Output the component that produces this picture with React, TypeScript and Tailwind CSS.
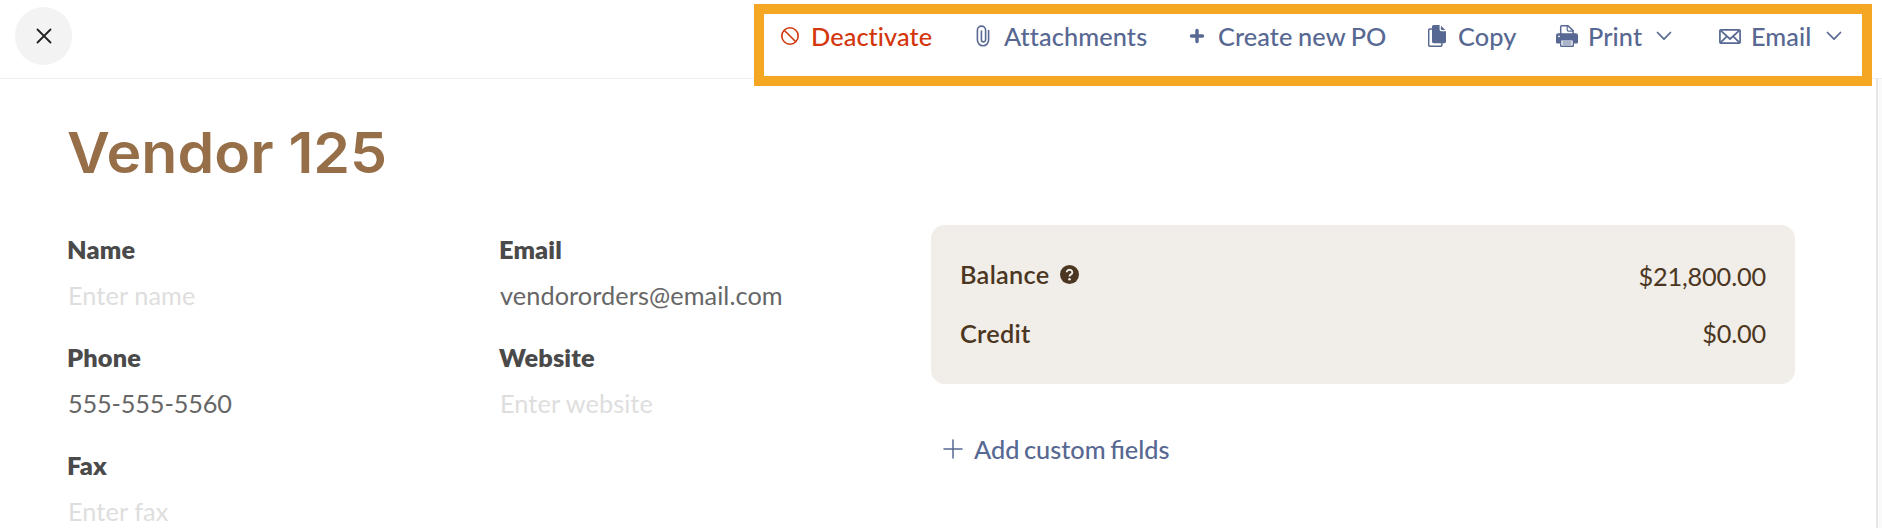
import React from 'react';

type IconProps = { className?: string };

const CloseIcon = () => (
  <svg className="w-4 h-4" viewBox="0 0 16 16" fill="none" stroke="currentColor" strokeWidth="1.8" strokeLinecap="round">
    <path d="M1.500 1.500l13 13M14.500 1.500l-13 13" />
  </svg>
);

const BanIcon = () => (
  <svg className="w-[18px] h-[18px]" viewBox="0 0 18 18" fill="none" stroke="currentColor" strokeWidth="1.6">
    <circle cx="9" cy="9" r="8.200" />
    <path d="M3.200 3.200l11.600 11.600" />
  </svg>
);

const ClipIcon = () => (
  <svg className="w-[14px] h-[22px]" viewBox="0 0 14 22" fill="none" stroke="currentColor" strokeWidth="1.6" strokeLinecap="round">
    <path d="M12.600 5.500v9.600a5.600 5.600 0 0 1-11.200 0V5.200a4.100 4.100 0 0 1 8.200 0v9.600a2.100 2.100 0 0 1-4.200 0V6" />
  </svg>
);

const PlusIcon = () => (
  <svg className="w-4 h-4" viewBox="0 0 16 16" fill="none" stroke="currentColor" strokeWidth="3.4" strokeLinecap="round">
    <path d="M8 2.500v11M2.500 8h11" />
  </svg>
);

const CopyIcon = () => (
  <svg className="w-[18px] h-[22px]" viewBox="0 0 18 22" fill="currentColor">
    <path d="M5.600 0h6v4.600a1.600 1.600 0 0 0 1.600 1.600H18v10.400a1.600 1.600 0 0 1-1.600 1.600H5.600A1.600 1.600 0 0 1 4 16.600V1.600A1.600 1.600 0 0 1 5.600 0z" />
    <path d="M12.900.7l4.500 4.400h-3.700a.8.8 0 0 1-.8-.8z" />
    <path d="M4 3.900H2A1.300 1.300 0 0 0 .7 5.200V20A1.300 1.300 0 0 0 2 21.300h10.600a1.300 1.300 0 0 0 1.300-1.300v-2" fill="none" stroke="currentColor" strokeWidth="1.5" />
  </svg>
);

const PrintIcon = () => (
  <svg className="w-[22px] h-[22px]" viewBox="0 0 22 22">
    <path d="M4.700 9V1.800a1 1 0 0 1 1-1h6.300l5.100 4.800V9" fill="none" stroke="currentColor" strokeWidth="1.500" />
    <path d="M11.200 1v3.800a1.300 1.300 0 0 0 1.300 1.300h4.600" fill="none" stroke="currentColor" strokeWidth="1.200" />
    <path d="M2.200 8.300h17.600A2.200 2.200 0 0 1 22 10.500v6.800a1.200 1.200 0 0 1-1.200 1.200H18v2.200a1.300 1.300 0 0 1-1.300 1.300H5.300A1.300 1.300 0 0 1 4 20.700v-2.200H1.200A1.200 1.200 0 0 1 0 17.300v-6.800a2.200 2.200 0 0 1 2.200-2.200z" fill="currentColor" />
    <circle cx="3" cy="11.300" r=".9" fill="#fff" />
    <path d="M5.300 15.500h11.400v5H5.300z" fill="#fff" />
    <path d="M6.500 17h9M6.500 19h9" stroke="currentColor" strokeWidth="1.100" />
  </svg>
);

const MailIcon = () => (
  <svg className="w-[22px] h-[15px]" viewBox="0 0 22 15" fill="none" stroke="currentColor" strokeWidth="1.700" strokeLinejoin="round">
    <rect x=".9" y=".9" width="20.200" height="13.200" rx="1" />
    <path d="M1.500 1.300L11 10l9.500-8.700M1.500 13.700l6.300-6.400M20.500 13.700l-6.300-6.400" />
  </svg>
);

const ChevronIcon = () => (
  <svg className="w-4 h-[10px]" viewBox="0 0 16 10" fill="none" stroke="currentColor" strokeWidth="1.700" strokeLinecap="round" strokeLinejoin="round">
    <path d="M1.500 1.500L8 8.200l6.500-6.700" />
  </svg>
);

const ThinPlusIcon = ({ className }: IconProps) => (
  <svg className={className} viewBox="0 0 20 20" fill="none" stroke="currentColor" strokeWidth="1.500" strokeLinecap="round">
    <path d="M10 1v18M1 10h18" />
  </svg>
);

const HelpIcon = () => (
  <svg className="w-[19px] h-[19px]" viewBox="0 0 19 19">
    <circle cx="9.500" cy="9.500" r="9.500" fill="currentColor" />
    <path d="M6.700 7.200a2.800 2.500 0 1 1 4.300 2.200c-.9.600-1.500 1-1.500 2.100" fill="none" stroke="#f1ede8" strokeWidth="1.900" />
    <circle cx="9.500" cy="14.300" r="1.250" fill="#f1ede8" />
  </svg>
);

const actions = [
  { label: 'Deactivate', icon: <BanIcon />, className: 'w-[193px] text-[#d3360c]' },
  { label: 'Attachments', icon: <ClipIcon />, className: 'w-[214px]' },
  { label: 'Create new PO', icon: <PlusIcon />, className: 'w-[240px]' },
  { label: 'Copy', icon: <CopyIcon />, className: 'w-[130px]' },
  { label: 'Print', icon: <PrintIcon />, className: 'w-[163px]', menu: true },
  { label: 'Email', icon: <MailIcon />, className: '', menu: true },
];

const fields = [
  { label: 'Name', value: '', placeholder: 'Enter name' },
  { label: 'Email', value: 'vendororders@email.com', placeholder: 'Enter email' },
  { label: 'Phone', value: '555-555-5560', placeholder: 'Enter phone' },
  { label: 'Website', value: '', placeholder: 'Enter website' },
  { label: 'Fax', value: '', placeholder: 'Enter fax' },
];

const Header = () => (
  <header className="flex h-[79px] shrink-0 items-start justify-between border-b border-[#eeeeee] pr-[10px] pl-[15px]">
    <button className="mt-[7px] flex h-[58px] w-[57px] items-center justify-center rounded-full bg-[#f3f3f3] text-[#222]">
      <CloseIcon />
    </button>
    <div className="z-10 mt-1 flex h-[82px] w-[1118px] items-start border-[10px] border-[#f5a623] bg-white pt-[6px] pl-[15px] font-medium tracking-[0.1px] text-[#576892]">
      {actions.map(action => (
        <button key={action.label} className={`flex h-8 shrink-0 items-center whitespace-nowrap [word-spacing:-1px] ${action.className}`}>
          <span className="mr-[10px] flex w-[22px] justify-center">{action.icon}</span>
          {action.label}
          {action.menu && <span className="ml-[14px]"><ChevronIcon /></span>}
        </button>
      ))}
    </div>
  </header>
);

const Field = ({ label, value, placeholder }: { label: string; value: string; placeholder: string }) => (
  <div className="h-[108px]">
    <div className="font-extrabold tracking-[0.15px] text-[#4a4a4a]">{label}</div>
    <div className={`mt-[14px] pl-px ${value ? 'text-[#666]' : 'text-[#dedede]'} ${/^\d/.test(value) ? 'tracking-[-0.15px]' : 'tracking-[0.08px]'}`}>
      {value || placeholder}
    </div>
  </div>
);

const Summary = () => (
  <div className="w-[864px]">
    <div className="h-[159px] rounded-[14px] bg-[#f1ede8] px-7 pt-[33px] text-[#4b3621]">
      <div className="flex items-start justify-between">
        <div className="flex items-center pl-px font-semibold tracking-[0.3px]">
          Balance
          <span className="ml-[10px]"><HelpIcon /></span>
        </div>
        <div className="pt-[2px] pr-px tracking-[-0.15px]">$21,800.00</div>
      </div>
      <div className="mt-[25px] flex justify-between">
        <div className="pl-px font-semibold tracking-[0.3px]">Credit</div>
        <div className="pr-px tracking-[-0.2px]">$0.00</div>
      </div>
    </div>
    <button className="mt-[49px] ml-3 flex items-center font-medium text-[#576892] [word-spacing:-1.8px]">
      <ThinPlusIcon className="mr-[11px] h-5 w-5" />
      Add custom fields
    </button>
  </div>
);

export default function App() {
  return (
    <div className="flex h-[528px] w-[1882px] flex-col overflow-hidden bg-white font-['Lato',sans-serif] text-[25.3px] leading-8">
      <Header />
      <div className="flex flex-1">
        <main className="w-[1876px] shrink-0 pt-[42px] pl-[67px]">
          <h1 className="w-fit origin-left scale-x-[1.053] font-['Inter',sans-serif] text-[56px] leading-[64px] font-semibold text-[#966f49]">
            Vendor 125
          </h1>
          <div className="mt-10 flex">
            <div className="mt-2 grid w-[864px] grid-cols-2 content-start">
              {fields.map(field => (
                <Field key={field.label} {...field} />
              ))}
            </div>
            <Summary />
          </div>
        </main>
        <div className="flex-1 border-l-2 border-[#e6e6e6] bg-[#fafafa]" />
      </div>
    </div>
  );
}
